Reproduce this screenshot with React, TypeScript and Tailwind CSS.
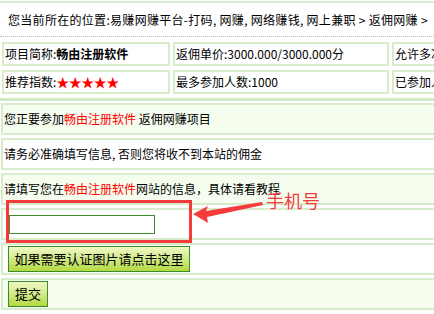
import React from "react";

const cjk = "font-['Noto_Sans_CJK_SC','Liberation_Sans',sans-serif]";

export default function App() {
  return (
    <div className={`relative w-[434px] h-[314px] overflow-hidden bg-white text-[12px] leading-[14px] text-black ${cjk}`}>
      <div className="w-[640px]">
        {/* top line */}
        <div className="mt-[1px] h-[2px] bg-[#d8ebca]" />

        {/* breadcrumb */}
        <div className="h-[34px] flex items-center pl-[8px] border-b border-dotted border-[#b8b8b8] whitespace-nowrap tracking-[0.3px]">
          您当前所在的位置:易赚网赚平台-打码, 网赚, 网络赚钱, 网上兼职&nbsp;&gt;&nbsp;返佣网赚&nbsp;&gt;
        </div>

        {/* project summary */}
        <div className="mt-[5px] ml-[2px] grid grid-cols-[168px_216px_240px] grid-rows-[24px_24px] gap-x-[3px] gap-y-[4px] whitespace-nowrap">
          <div className="border-2 border-[#d8ebca] flex items-center px-[1px]">
            项目简称:<span className="font-bold">畅由注册软件</span>
          </div>
          <div className="border-2 border-[#d8ebca] flex items-center px-[1px]">返佣单价:3000.000/3000.000分</div>
          <div className="border-2 border-[#d8ebca] flex items-center px-[1px]">允许多次参加:否</div>
          <div className="border-2 border-[#d8ebca] flex items-center px-[1px]">
            推荐指数:<span className="text-[#ff0000] text-[13px] tracking-[-0.5px]">★★★★★</span>
          </div>
          <div className="border-2 border-[#d8ebca] flex items-center px-[1px]">最多参加人数:1000</div>
          <div className="border-2 border-[#d8ebca] flex items-center px-[1px]">已参加人数:0</div>
        </div>

        <div className="mt-[4px] h-[3px] bg-[#d5e8c6]" />

        {/* form rows */}
        <div className="mt-[2px] ml-[1px] flex flex-col gap-[3px] whitespace-nowrap">
          <div className="h-[32px] border-2 border-[#d8ebca] bg-[#f5fdef] flex items-center pl-[1px]">
            您正要参加<span className="text-[#ff0000]">畅由注册软件</span>&nbsp;返佣网赚项目
          </div>
          <div className="h-[32px] border-2 border-[#d8ebca] bg-white flex items-center pl-[1px]">
            请务必准确填写信息, 否则您将收不到本站的佣金
          </div>
          <div className="h-[32px] border-2 border-[#d8ebca] bg-[#f5fdef] flex items-center pl-[1px]">
            请填写您在<span className="text-[#ff0000]">畅由注册软件</span>网站的信息，具体请看教程
          </div>
          <div className="h-[32px] border-2 border-[#d8ebca] bg-white flex items-center pl-[6px]">
            <input className="w-[146px] h-[19px] border border-[#3c8c2c] bg-white outline-none" />
          </div>
          <div className="h-[32px] border-2 border-[#d8ebca] bg-white flex items-center pl-[5px]">
            <button className="w-[182px] h-[26px] border border-[#3c8c2c] bg-gradient-to-b from-[#f0f8c4] to-[#b4da3c] text-[13px] leading-[16px] text-black">
              如果需要认证图片请点击这里
            </button>
          </div>
          <div className="h-[32px] border-2 border-[#d8ebca] bg-[#f5fdef] flex items-center pl-[5px]">
            <button className="w-[40px] h-[26px] border border-[#3c8c2c] bg-gradient-to-b from-[#f0f8c4] to-[#b4da3c] text-[13px] leading-[16px] text-black">
              提交
            </button>
          </div>
        </div>
      </div>

      {/* annotation */}
      <div className="absolute left-[6px] top-[200px] w-[186px] h-[43px] border-[3px] border-[#f43b3b]" />
      <svg className="absolute left-0 top-0 pointer-events-none" width="434" height="314">
        <polygon
          points="193,214 208,206 206,211 262,202 263,205 207,217 208,223"
          fill="#f43b3b"
        />
      </svg>
      <div className="absolute left-[266px] top-[189px] text-[18px] leading-[22px] text-[#f43b3b]">手机号</div>
    </div>
  );
}
